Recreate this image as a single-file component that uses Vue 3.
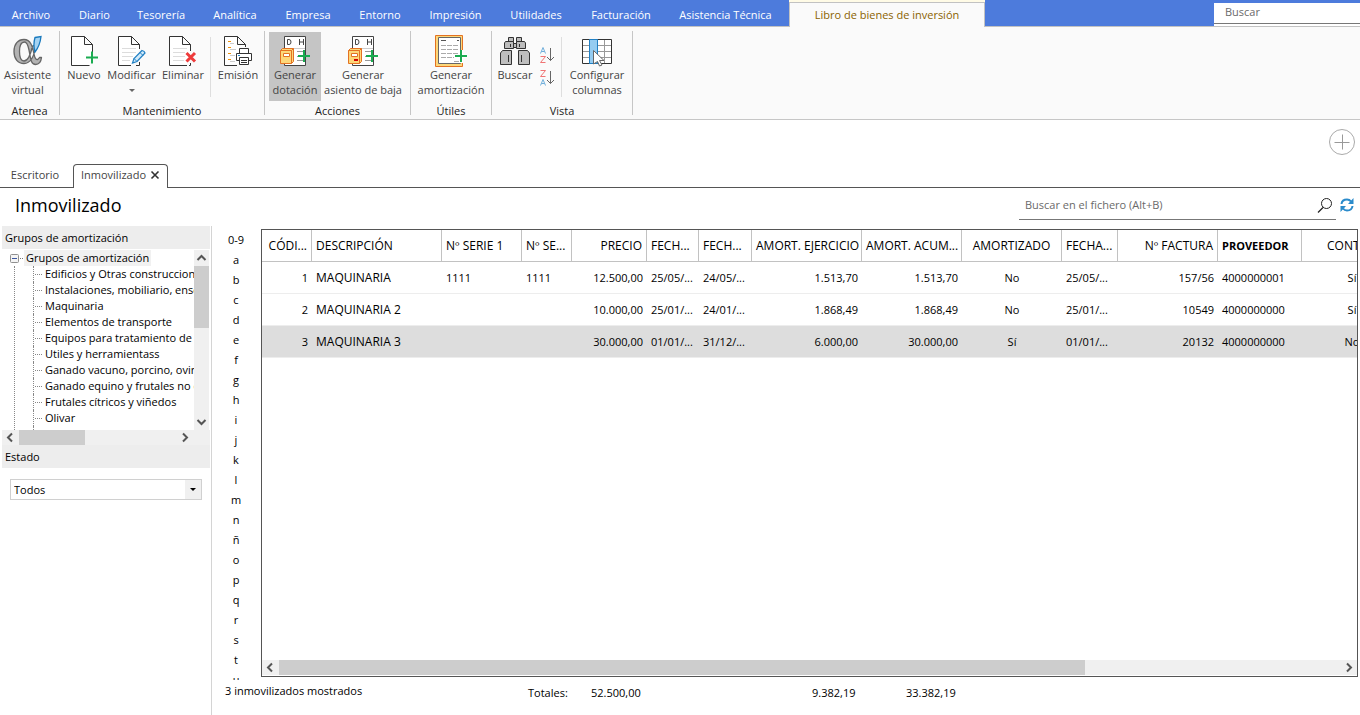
<script setup>
import { ref } from 'vue'

const menus = [
  { name: 'Archivo', w: 62 }, { name: 'Diario', w: 65 }, { name: 'Tesorería', w: 68 },
  { name: 'Analítica', w: 80 }, { name: 'Empresa', w: 66 }, { name: 'Entorno', w: 78 },
  { name: 'Impresión', w: 73 }, { name: 'Utilidades', w: 88 }, { name: 'Facturación', w: 82 },
  { name: 'Asistencia Técnica', w: 127 }
]

const tree = [
  'Edificios y Otras construcciones', 'Instalaciones, mobiliario, enseres', 'Maquinaria',
  'Elementos de transporte', 'Equipos para tratamiento de información', 'Utiles y herramientass',
  'Ganado vacuno, porcino, ovino', 'Ganado equino y frutales no cítricos',
  'Frutales cítricos y viñedos', 'Olivar'
]

const letters = ['0-9', ...'abcdefghijklmnñopqrstu']

const columns = [
  { name: 'CÓDI...', w: 50, align: 'right' },
  { name: 'DESCRIPCIÓN', w: 130, align: 'left', wide: true },
  { name: 'Nº SERIE 1', w: 80, align: 'left' },
  { name: 'Nº SE...', w: 50, align: 'left' },
  { name: 'PRECIO', w: 75, align: 'right' },
  { name: 'FECH...', w: 52, align: 'left' },
  { name: 'FECH...', w: 53, align: 'left' },
  { name: 'AMORT. EJERCICIO', w: 110, align: 'right' },
  { name: 'AMORT. ACUM...', w: 100, align: 'right' },
  { name: 'AMORTIZADO', w: 100, align: 'center' },
  { name: 'FECHA...', w: 56, align: 'left' },
  { name: 'Nº FACTURA', w: 100, align: 'right' },
  { name: 'PROVEEDOR', w: 84, align: 'left', sorted: true },
  { name: 'CONT', w: 100, align: 'center', last: true }
]

const rows = [
  ['1', 'MAQUINARIA', '1111', '1111', '12.500,00', '25/05/...', '24/05/...', '1.513,70', '1.513,70', 'No', '25/05/...', '157/56', '4000000001', 'Sí'],
  ['2', 'MAQUINARIA 2', '', '', '10.000,00', '25/01/...', '24/01/...', '1.868,49', '1.868,49', 'No', '25/01/...', '10549', '4000000000', 'Sí'],
  ['3', 'MAQUINARIA 3', '', '', '30.000,00', '01/01/...', '31/12/...', '6.000,00', '30.000,00', 'Sí', '01/01/...', '20132', '4000000000', 'No']
]
const selected = ref(2)
</script>

<template>
  <div class="app">
    <header class="menubar">
      <nav class="menus">
        <button v-for="m in menus" :key="m.name" class="menu" :style="{ width: m.w + 'px' }">{{ m.name }}</button>
        <button class="menu active">Libro de bienes de inversión</button>
      </nav>
      <label class="topsearch"><input type="text" placeholder="Buscar" aria-label="Buscar" /></label>
    </header>

    <section class="ribbon">
      <div class="group atenea">
        <div class="tools">
          <button class="tool">
            <svg class="icon" viewBox="0 0 32 32">
              <path fill-rule="evenodd" d="M24 10C22.500 20 19 28.500 12 28.500C6 28.500 2 24 2 16.500C2 9 6 4.500 12 4.500C19 4.500 20.500 12 22 19C23 24.500 25 26.500 27.500 22.500H29.500C29 27 26.500 29.500 23.500 29.500C18.500 29.500 18.500 22 17 15C16 10 15 7 12.500 7C9 7 7.500 11 7.500 16.500C7.500 22 9 26 12 26C16 26 18.500 20 20.500 11Z" fill="#b3b3b3" stroke="#666" stroke-width="1.300" stroke-linejoin="round" />
              <path d="M23 2.500L29 1.500C28.500 6 27 12 23 17C21.500 12 22 6 23 2.500Z" fill="#a5d3f2" stroke="#1979bd" stroke-width="1.300" />
            </svg>
            <span>Asistente<br />virtual</span>
          </button>
        </div>
        <h2>Atenea</h2>
      </div>

      <div class="group mant">
        <div class="tools">
          <button class="tool w40">
            <svg class="icon" viewBox="-1 0 32 32">
              <path d="M20.500 30.500H2.500V1.500H15.500L23.500 9.500V17M15.500 1.500V9.500H23.500" fill="#fff" stroke="#333" />
              <path d="M17 22.500H29M23 16.500V28.500" stroke="#1aab50" stroke-width="2" />
            </svg>
            <span>Nuevo</span>
          </button>
          <button class="tool w55">
            <svg class="icon" viewBox="0 0 32 32">
              <path d="M15 30.500H2.500V1.500H15.500L23.500 9.500V14M23.500 27V30.500H20M15.500 1.500V9.500H23.500" fill="#fff" stroke="#333" />
              <path d="M6 13.500H20M6 17.500H20M6 21.500H17M6 25.500H14" stroke="#dcdcdc" />
              <path d="M16.500 28L18 23.500L26 15.500Q28.500 16 29 18L21 26.500Z" fill="#d3ebfa" stroke="#2180c4" stroke-width="1.200" />
              <path d="M24 17.500L27 20.500M18 23.500L21 26.500" stroke="#2180c4" />
            </svg>
            <span>Modificar</span>
            <i class="drop"></i>
          </button>
          <button class="tool w48">
            <svg class="icon" viewBox="0 0 32 32">
              <path d="M20 30.500H2.500V1.500H15.500L23.500 9.500V16M23.500 28V30.500H22M15.500 1.500V9.500H23.500" fill="#fff" stroke="#333" />
              <path d="M6 13.500H20M6 17.500H18M6 21.500H18M6 25.500H17" stroke="#dcdcdc" />
              <path d="M19.500 18L28 26.500M28 18L19.500 26.500" stroke="#ee3b3b" stroke-width="3" />
            </svg>
            <span>Eliminar</span>
          </button>
          <i class="sep"></i>
          <button class="tool w48">
            <svg class="icon" viewBox="0 0 32 32">
              <path d="M15 30.500H2.500V1.500H15.500L23.500 9.500V12M15.500 1.500V9.500H23.500" fill="#fff" stroke="#333" />
              <path d="M6 6.500H9M6 12.500H9M6 18.500H9M6 24.500H9" stroke="#f0920a" />
              <path d="M8 8.500H12M8 14.500H14M8 20.500H13M8 26.500H13" stroke="#ccc" />
              <path d="M17.500 18V13.500H26.500V18M17.500 25.500H14.500V18.500H29.500V25.500H26.500" fill="#fff" stroke="#333" />
              <path d="M17.500 22.500H26.500V29.500H17.500ZM19 25.500H25M19 27.500H25" fill="#fff" stroke="#333" />
              <path d="M16 20.500H18" stroke="#2180c4" />
            </svg>
            <span>Emisión</span>
          </button>
        </div>
        <h2>Mantenimiento</h2>
      </div>

      <div class="group acc">
        <div class="tools">
          <button v-for="n in 2" :key="n" class="tool" :class="n === 1 ? 'pressed' : 'w84'">
            <svg class="icon" viewBox="0 0 32 32">
              <path d="M5.500 1.500H26.500V30.500H5.500Z" fill="#fff" stroke="#444" />
              <path d="M6 13.500H26" stroke="#ccc" />
              <path d="M8.500 4.500H10Q12 4.500 12 7Q12 9.500 10 9.500H8.500ZM20.500 4V10M24.500 4V10M20.500 7H24.500" fill="none" stroke="#444" />
              <path d="M18 16.500H24M18 21.500H23M18 25.500H24" stroke="#999" />
              <path d="M3.500 13.500H14.500V26.500L12.500 28.500H1.500V15.500Z" fill="#fdd779" stroke="#e37222" stroke-linejoin="round" />
              <path d="M1.500 15.500H12.500V28.500M12.500 15.500L14.500 13.500" stroke="#e37222" />
              <path d="M4.500 18.500H10.500V21.500H4.500Z" fill="#fff" stroke="#e37222" />
              <path v-if="n === 2" d="M7 25H11" stroke="#d40000" stroke-width="2" />
              <path d="M19 21H31M25 15V27" stroke="#1aab50" stroke-width="2" />
            </svg>
            <span v-if="n === 1">Generar<br />dotación</span>
            <span v-else>Generar<br />asiento de baja</span>
          </button>
        </div>
        <h2>Acciones</h2>
      </div>

      <div class="group util">
        <div class="tools">
          <button class="tool">
            <svg class="icon" viewBox="0 0 32 32">
              <path d="M.5 .5H27.500V31.500H.5Z" fill="#fdd779" stroke="#e37222" />
              <path d="M3.500 2.500H25.500V28.500H3.500Z" fill="#fff" stroke="#666" />
              <path d="M6 5.500H11M22 5.500H24" stroke="#555" />
              <path d="M6 10.500H23M6 14.500H23M6 18.500H23M6 22.500H19M19 26.500H24" stroke="#aaa" stroke-dasharray="5 1" />
              <path d="M20 21H32M26 15V28" stroke="#fff" stroke-width="4" />
              <path d="M20 21H32M26 15V27" stroke="#1aab50" stroke-width="2" />
            </svg>
            <span>Generar<br />amortización</span>
          </button>
        </div>
        <h2>Útiles</h2>
      </div>

      <div class="group vista">
        <div class="tools">
          <button class="tool w40">
            <svg class="icon" viewBox="0 0 32 32">
              <g fill="#bdbdbd" stroke="#333">
                <path d="M9.500 2.500H14.500V6.500H9.500ZM17.500 2.500H22.500V6.500H17.500Z" />
                <path d="M6.500 6.500H14.500V13.500H5.500V8ZM17.500 6.500H25.500L26.500 8V13.500H17.500Z" />
                <path d="M14.500 8.500H17.500V12.500H14.500Z" />
                <path d="M3.500 15.500H12.500V29.500H1.500V18ZM19.500 15.500H28.500L30.500 18V29.500H19.500Z" />
                <path d="M11.500 9V12M20.500 9V12M9.500 20V27M22.500 20V27" />
              </g>
            </svg>
            <span>Buscar</span>
          </button>
          <div class="sorts">
            <button v-for="n in 2" :key="n" class="sort" :aria-label="n === 1 ? 'Orden ascendente' : 'Orden descendente'">
              <svg viewBox="0 0 16 18">
                <path :transform="n === 1 ? '' : 'translate(0 9)'" d="M1.500 7.500L4 1.500L6.500 7.500M2.500 5.500H5.500" fill="none" stroke="#6faedb" />
                <path :transform="n === 1 ? 'translate(0 9)' : ''" d="M1.500 1.500H6.500L1.500 7.500H6.500" fill="none" stroke="#f07474" />
                <path d="M11.500 2V14.500M8 11L11.500 14.500L15 11" fill="none" stroke="#666" />
              </svg>
            </button>
          </div>
          <i class="sep"></i>
          <button class="tool w64">
            <svg class="icon" viewBox="0 0 32 32">
              <path d="M1.500 4.500H30.500V28.500H1.500Z" fill="#fff" />
              <path d="M2 10.500H30M2 16.500H30M2 22.500H30M16.500 5V28M23.500 5V28" stroke="#999" />
              <path d="M1.500 4.500H30.500V28.500H1.500Z" fill="none" stroke="#333" />
              <path d="M8.500 4.500H16.500V28.500H8.500Z" fill="#95ccf1" stroke="#2180c4" />
              <path d="M12.500 15.500L23 25.500H18.500L21 30L18.500 31L16.500 26.500L12.500 29Z" fill="#fff" stroke="#666" />
            </svg>
            <span>Configurar<br />columnas</span>
          </button>
        </div>
        <h2>Vista</h2>
      </div>
    </section>

    <div class="strip">
      <button class="add" aria-label="Añadir">
        <svg viewBox="0 0 28 28"><circle cx="14" cy="14" r="12.500" fill="#fff" stroke="#aaa" /><path d="M6.500 14.500H21.500M14.500 6.500V21.500" stroke="#999" /></svg>
      </button>
      <nav class="tabs">
        <button class="tab">Escritorio</button>
        <button class="tab current">Inmovilizado
          <svg viewBox="0 0 10 10"><path d="M1.500 1.500L8.500 8.500M8.500 1.500L1.500 8.500" stroke="#333" stroke-width="1.600" /></svg>
        </button>
        <i class="rest"></i>
      </nav>
    </div>

    <div class="titlebar">
      <h1>Inmovilizado</h1>
      <label class="filesearch">
        <input type="text" placeholder="Buscar en el fichero (Alt+B)" aria-label="Buscar en el fichero" />
        <svg viewBox="0 0 16 16"><circle cx="9.500" cy="6.500" r="5" fill="none" stroke="#222" /><path d="M6 10.500L1 15.500" stroke="#222" stroke-width="1.200" /></svg>
      </label>
      <button class="refresh" aria-label="Actualizar">
        <svg viewBox="0 0 16 16"><path d="M2.500 7Q3 2.500 8 2.500Q10.500 2.500 12 4.500M13.500 9Q13 13.500 8 13.500Q5.500 13.500 4 11.500" fill="none" stroke="#2b8bcb" stroke-width="2" /><path d="M14.500 1V7H9ZM1.500 15V9H7Z" fill="#2b8bcb" /></svg>
      </button>
    </div>

    <main class="main">
      <aside class="side">
        <h3>Grupos de amortización</h3>
        <div class="treebox">
          <div class="tree">
            <div class="root">
              <svg viewBox="0 0 22 16"><rect x="8.500" y="4.500" width="8" height="8" rx="1" fill="#f4f4f4" stroke="#909090" /><path d="M10 8.500H15" stroke="#3a55a0" /><path d="M18 8.500H22" stroke="#777" stroke-dasharray="1 1" /></svg>
              <span>Grupos de amortización</span>
            </div>
            <ul>
              <li v-for="t in tree" :key="t">{{ t }}</li>
            </ul>
          </div>
          <div class="vbar">
            <svg viewBox="0 0 15 16"><path d="M3.500 10L7.500 6L11.500 10" /></svg>
            <i class="vthumb"></i>
            <svg viewBox="0 0 15 16"><path d="M3.500 6L7.500 10L11.500 6" /></svg>
          </div>
        </div>
        <div class="hbar tbar">
          <svg viewBox="0 0 17 15"><path d="M10 3.500L6 7.500L10 11.500" /></svg>
          <div class="track"><i class="hthumb"></i></div>
          <svg viewBox="0 0 17 15"><path d="M7 3.500L11 7.500L7 11.500" /></svg>
        </div>
        <h3><label for="estado">Estado</label></h3>
        <div class="combo">
          <select id="estado"><option>Todos</option></select>
          <span class="arrow"></span>
        </div>
      </aside>

      <div class="content">
        <div class="work">
          <nav class="letters">
            <button v-for="l in letters" :key="l">{{ l }}</button>
          </nav>
          <div class="gridbox">
            <div class="scroll">
              <table>
                <colgroup><col v-for="(c, i) in columns" :key="i" :style="{ width: c.w + 'px' }" /></colgroup>
                <thead>
                  <tr><th v-for="(c, i) in columns" :key="i" :class="[c.align, { sorted: c.sorted, last: c.last }]">{{ c.name }}</th></tr>
                </thead>
                <tbody>
                  <tr v-for="(r, k) in rows" :key="k" :class="{ sel: k === selected }" @click="selected = k">
                    <td v-for="(v, i) in r" :key="i" :class="[columns[i].align, { caps: columns[i].wide }]">{{ v }}</td>
                  </tr>
                </tbody>
              </table>
            </div>
            <div class="hbar">
              <svg viewBox="0 0 17 15"><path d="M10 3.500L6 7.500L10 11.500" /></svg>
              <div class="track"><i class="hthumb wide"></i></div>
              <svg viewBox="0 0 17 15"><path d="M7 3.500L11 7.500L7 11.500" /></svg>
            </div>
          </div>
        </div>
        <footer class="foot">
          <span class="count">3 inmovilizados mostrados</span>
          <span class="tot">Totales:</span>
          <span class="tot">52.500,00</span>
          <span class="tot">9.382,19</span>
          <span class="tot">33.382,19</span>
        </footer>
      </div>
    </main>
  </div>
</template>

<style>
body { background: #fff; overflow: hidden; }
</style>

<style scoped>
* { box-sizing: border-box; }
.app { height: 100vh; min-height: 500px; display: flex; flex-direction: column; font-family: "Open Sans", "Noto Sans", sans-serif; font-size: 11px; line-height: 16px; color: #000; }
button { font: inherit; color: inherit; background: none; border: 0; padding: 0; margin: 0; }
input, select { font: inherit; color: #000; border: 0; outline: 0; background: none; padding: 0; }
input::placeholder { color: #6a6a6a; opacity: 1; }
h1, h2, h3, ul { margin: 0; padding: 0; font-weight: 400; font-size: inherit; }
svg { display: block; fill: none; }

.menubar { display: flex; justify-content: space-between; height: 27px; flex: none; background: #4d7bdc; border-bottom: 1px solid #c2c2c2; }
.menus { display: flex; height: 27px; }
.menu { color: #fff; white-space: nowrap; padding-top: 3px; }
.menu.active { width: 196px; color: #8a6200; background: #fafafa; border: 1px solid #c2c2c2; border-bottom: 0; padding-top: 0; margin-top: 2px; box-shadow: 0 -2px 0 #fffbe6; clip-path: inset(-2px 0 0 0); }
.topsearch { width: 146px; height: 26px; padding-top: 3px; background: linear-gradient(#4d7bdc 3px, #fff 3px); }
.topsearch input { width: 100%; height: 21px; padding: 0 11px 3px; border-bottom: 1px solid #777; }

.ribbon { display: flex; height: 93px; flex: none; background: #fafafa; border-bottom: 1px solid #c6c6c6; padding: 4px 0; }
.group { display: flex; flex-direction: column; border-right: 1px solid #c6c6c6; color: #444; }
.group h2 { text-align: center; line-height: 14px; color: #222; margin-top: 3px; }
.tools { display: flex; height: 70px; padding: 1px 0 0 4px; }
.atenea { width: 60px; }
.mant { width: 205px; }
.acc { width: 146px; }
.util { width: 81px; }
.vista { width: 141px; }
.vista .tools { padding-left: 3px; }
.util .tools { justify-content: center; padding-left: 0; }
.tool { display: flex; flex-direction: column; align-items: center; height: 69px; padding-top: 3px; line-height: 15px; white-space: nowrap; }
.icon { width: 32px; height: 32px; flex: none; }
.w40 { width: 40px; }
.w48 { width: 48px; }
.w55 { width: 55px; }
.w64 { width: 64px; }
.w84 { width: 84px; }
.pressed { width: 52px; background: #c5c5c5; }
.drop { border: 3px solid transparent; border-top-color: #666; border-bottom: 0; margin-top: 7px; }
.sep { width: 1px; height: 60px; background: #dedede; margin: 5px 3px; }
.sorts { display: flex; flex-direction: column; gap: 5px; padding-top: 14px; width: 23px; align-items: center; }
.sort svg { width: 16px; height: 18px; }

.strip { flex: none; height: 68px; display: flex; flex-direction: column; justify-content: space-between; padding-top: 8px; }
.add { align-self: flex-end; width: 28px; height: 28px; margin-right: 4px; }
.tabs { display: flex; height: 24px; color: #444; }
.tab { width: 73px; border-bottom: 1px solid #555; padding: 0 3px 1px 0; }
.tab.current { width: 95px; display: flex; align-items: center; justify-content: center; gap: 4px; border: 1px solid #555; border-bottom: 0; border-radius: 4px 4px 0 0; padding: 0 0 3px; }
.tab svg { width: 10px; height: 10px; }
.rest { flex: 1; border-bottom: 1px solid #555; }

.titlebar { flex: none; display: flex; height: 38px; align-items: center; padding: 0 5px 4px 15px; }
h1 { flex: 1; font-size: 18px; line-height: 34px; }
.filesearch { display: flex; width: 317px; height: 30px; align-items: center; border-bottom: 1px solid #777; padding: 0 3px 0 6px; margin-right: 3px; }
.filesearch input { flex: 1; min-width: 0; }
.filesearch svg { width: 16px; height: 16px; }
.refresh svg { width: 16px; height: 16px; }

.main { flex: 1; min-height: 0; display: flex; }
.side { width: 212px; flex: none; padding: 0 1px 0 2px; border-right: 1px solid #d4d4d4; }
.side h3 { height: 23px; line-height: 24px; padding-left: 3px; background: #ededed; }
.treebox { display: flex; height: 181px; padding-top: 1px; }
.tree { flex: 1; min-width: 0; overflow: hidden; white-space: nowrap; }
.root { display: flex; height: 16px; }
.root svg { width: 22px; height: 16px; }
.root span { background: #f1f1f1; padding: 0 2px; }
.tree ul { list-style: none; margin-left: 12px; border-left: 1px dotted #888; padding-left: 18px; }
.tree li { height: 16px; padding-left: 11px; background: repeating-linear-gradient(90deg, #888 0 1px, transparent 1px 2px) 1px 8px / 8px 1px no-repeat; border-left: 1px dotted #888; }
.tree ul::after { content: ""; display: block; height: 10px; border-left: 1px dotted #888; }
.vbar { width: 15px; margin-right: 1px; display: flex; flex-direction: column; background: #f0f0f0; }
.vbar svg { width: 15px; height: 16px; }
.vthumb { height: 62px; background: #cdcdcd; margin-bottom: auto; }
.vbar path, .hbar path { stroke: #555; stroke-width: 2; fill: none; }
.hbar { display: flex; height: 15px; background: #f0f0f0; }
.hbar svg { width: 17px; height: 15px; flex: none; }
.track { flex: 1; display: flex; }
.hthumb { width: 42%; background: #cdcdcd; }
.hthumb.wide { width: 76%; }
.tbar { padding-right: 17px; }
.combo { position: relative; margin: 11px 8px; height: 21px; border: 1px solid #d0d0d0; }
.combo select { width: 100%; height: 19px; padding-left: 3px; appearance: none; }
.arrow { position: absolute; right: 0; top: 0; width: 16px; height: 19px; background: #f0f0f0; pointer-events: none; }
.arrow::after { content: ""; position: absolute; left: 5px; top: 8px; border: 3px solid transparent; border-top-color: #000; border-bottom: 0; }

.content { flex: 1; min-width: 0; display: flex; flex-direction: column; padding-top: 3px; }
.work { flex: 1; min-height: 0; display: flex; }
.letters { width: 48px; margin: 0 1px 1px 0; flex: none; overflow: hidden; padding-top: 1px; }
.letters button { display: block; width: 100%; height: 20px; }
.gridbox { flex: 1; min-width: 0; display: flex; flex-direction: column; margin: 0 2px 4px 0; border: 1px solid #555; padding-bottom: 1px; }
.scroll { flex: 1; min-height: 0; overflow: hidden; }
table { table-layout: fixed; width: 1140px; border-collapse: separate; border-spacing: 0; }
th, td { height: 32px; padding: 0 4px; white-space: nowrap; overflow: hidden; font-weight: 400; border-bottom: 1px solid #ededed; }
th { font-size: 12px; border-right: 1px solid #c2c2c2; border-bottom-color: #c2c2c2; }
td.right { padding-right: 4px; }
.caps { font-size: 12px; }
.left { text-align: left; }
.right { text-align: right; }
.center { text-align: center; }
.sorted { font-weight: 700; font-size: 11px; }
.last { text-align: left; padding-left: 25px; }
.sel td { background: #ddd; }
.foot { flex: none; height: 34px; display: grid; grid-template-columns: 303px 63px 221px 94px 1fr; padding-left: 13px; }
.foot .count { padding-top: 2px; }
.foot .tot { padding-top: 4px; }
</style>
